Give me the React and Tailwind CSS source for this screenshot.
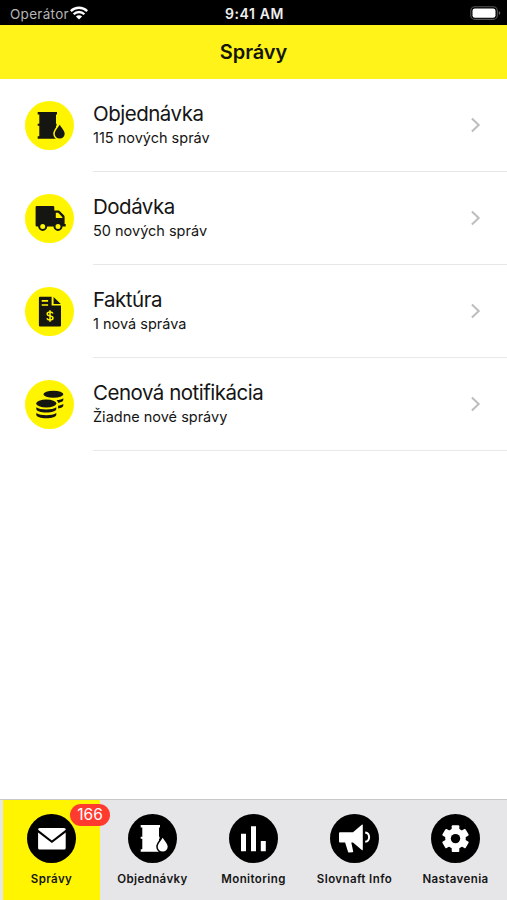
import React from "react";

function Barrel({ gap }) {
  return (
    <>
      <path d="M12.7 11h19.3v2.4h-1v9.4h.6v2h-.6v10.5h1v2.4H12.7v-2.4h1.6V24.8h-1.6v-2h1.6v-9.4h-1.6z" />
      <path d="M34.7 23.7c-1.7 3-5 5.9-5 8.9a5 5 0 0 0 10 0c0-3-3.3-5.9-5-8.9z" stroke={gap} strokeWidth="3" />
      <path d="M34.7 23.7c-1.7 3-5 5.9-5 8.9a5 5 0 0 0 10 0c0-3-3.3-5.9-5-8.9z" />
    </>
  );
}

function Truck() {
  return (
    <>
      <path d="M12 12h16a1.3 1.3 0 0 1 1.3 1.3v3.3h3.9q1 0 1.7.7l4 4q.7.7.7 1.7v7h1.1v2.5H11.9a1.3 1.3 0 0 1-1.3-1.3V13.3a1.3 1.3 0 0 1 1.4-1.3z" />
      <path d="M30.8 18.8h2.4l4.2 4.5v.8h-6.6z" fill="#fff500" />
      <circle cx="17.7" cy="32.4" r="3.5" fill="#fff500" stroke="#151511" strokeWidth="2" />
      <circle cx="33" cy="32.4" r="3.5" fill="#fff500" stroke="#151511" strokeWidth="2" />
    </>
  );
}

function Invoice() {
  return (
    <>
      <path d="M15 9.8h11.6v8.8H36V38.4a1.1 1.1 0 0 1-1.1 1.1H15a1.1 1.1 0 0 1-1.1-1.1V10.9A1.1 1.1 0 0 1 15 9.8zM28.6 10l7.2 7h-7.2z" />
      <path d="M16.7 13.9h6.4M16.7 18h6.4" stroke="#fff500" strokeWidth="1.6" />
      <path d="M28 26.5c-.5-1-1.5-1.5-3-1.5-1.7 0-2.8.7-2.8 1.9 0 2.8 5.8 1.3 5.8 4 0 1.3-1.2 2-3 2-1.6 0-2.7-.6-3.1-1.7M25 23.2v11.6" fill="none" stroke="#fff500" strokeWidth="1.5" />
    </>
  );
}

function Coins() {
  return (
    <>
      <ellipse cx="28.4" cy="14.2" rx="10" ry="3.5" />
      <path d="M31.5 20.3c3-.3 5.4-1 6.8-2v1.8c0 1.3-2.2 2.2-5 2.8-.4-1-.9-1.9-1.8-2.6zM33.1 25.8c2.1-.4 4-1 5.2-1.8v1.8c0 1.2-2 2.2-5.2 2.8z" />
      <ellipse cx="21.3" cy="23.5" rx="10.1" ry="4" />
      <path d="M11.3 27.3c2.2 1.5 5.7 2.2 10 2.2s7.8-.7 10-2.2v1.6c0 2-4.5 3.5-10 3.5s-10-1.5-10-3.5zM11.3 33.1c2.2 1.5 5.7 2.2 10 2.2s7.8-.7 10-2.2v1.6c0 2-4.5 3.5-10 3.5s-10-1.5-10-3.5z" />
    </>
  );
}

function Mail() {
  return (
    <>
      <path d="M12.6 14h24.6a1.5 1.5 0 0 1 1.5 1.5v.2L24.9 26.4 11.1 15.7v-.2a1.5 1.5 0 0 1 1.5-1.5z" />
      <path d="M11.1 18.5 24.9 29l13.8-10.5v15.4a1.5 1.5 0 0 1-1.5 1.5H12.6a1.5 1.5 0 0 1-1.5-1.5z" />
    </>
  );
}

function Bars() {
  return <path d="M12 19.7h5v17.6h-5zM22 12.3h5v25h-5zM31.8 27h5v10.3h-5z" />;
}

function Megaphone() {
  return (
    <>
      <path d="M10 18.2h13l8.8-7.4q1-.7 1 .3v24.5q0 1-1 .3L23 28.4h-1.7l1.9 9q.1.7-.6.8l-3.6.4q-.7 0-.9-.7l-3-9.5H10a1 1 0 0 1-1-1v-8.2a1 1 0 0 1 1-1z" />
      <path d="M35.2 18.6c5.2.7 5.2 8.5 0 9.2" fill="none" stroke="white" strokeWidth="2" />
    </>
  );
}

function Gear() {
  return (
    <>
      {[0, 60, 120].map((a) => (
        <rect key={a} x="20.7" y="11.2" width="7.6" height="26.8" rx="1" transform={`rotate(${a} 24.5 24.6)`} />
      ))}
      <circle cx="24.5" cy="24.6" r="10.3" />
      <circle cx="24.5" cy="24.6" r="4.7" fill="black" />
    </>
  );
}

function Badge({ dark, children }) {
  return (
    <svg viewBox="0 0 49 49" className="block h-[49px] w-[49px] shrink-0" fill={dark ? "white" : "#151511"} aria-hidden="true">
      <circle cx="24.5" cy="24.5" r="24.5" fill={dark ? "black" : "#fff500"} />
      {children}
    </svg>
  );
}

const messages = [
  { title: "Objednávka", note: "115 nových správ", icon: <Barrel gap="#fff500" /> },
  { title: "Dodávka", note: "50 nových správ", icon: <Truck /> },
  { title: "Faktúra", note: "1 nová správa", icon: <Invoice /> },
  { title: "Cenová notifikácia", note: "Žiadne nové správy", icon: <Coins /> },
];

const tabs = [
  { label: "Správy", icon: <Mail />, count: 166 },
  { label: "Objednávky", icon: <Barrel gap="black" /> },
  { label: "Monitoring", icon: <Bars /> },
  { label: "Slovnaft Info", icon: <Megaphone /> },
  { label: "Nastavenia", icon: <Gear /> },
];

export default function App() {
  return (
    <div className="flex h-[900px] w-[507px] flex-col overflow-hidden bg-white font-[Inter,sans-serif] text-[#151515]">
      <div className="grid h-[25px] shrink-0 grid-cols-3 items-center bg-black pr-[6px] pl-[10px]">
        <div className="flex items-center pt-[2px]">
          <span className="text-[13.5px] leading-5 tracking-[0.3px] text-[#b5b5b5]">Operátor</span>
          <svg viewBox="0 0 18 14" className="ml-px h-[14px] w-[18px] -translate-y-px" fill="none" stroke="white" strokeWidth="2.3" aria-hidden="true">
            <path d="M.8 5.1a11.7 11.7 0 0 1 16.4 0M3.6 8.2a7.7 7.7 0 0 1 10.8 0" />
            <path d="M9 13.6 5.9 10.5a4.4 4.4 0 0 1 6.2 0z" fill="white" stroke="none" />
          </svg>
        </div>
        <span className="pt-[2px] pr-[2px] text-center text-[14px] leading-5 font-semibold tracking-[0.6px] text-[#eee]">9:41 AM</span>
        <svg viewBox="0 0 31 14" className="h-[14px] w-[31px] justify-self-end" aria-hidden="true">
          <rect x=".8" y=".8" width="26.5" height="12.6" rx="4" fill="none" stroke="#555" strokeWidth="1.1" />
          <rect x="2.5" y="2.4" width="23" height="9.4" rx="2.4" fill="white" />
          <path d="M28.8 5q3 2 0 4.2z" fill="#666" />
        </svg>
      </div>
      <header className="flex h-[54px] shrink-0 items-center justify-center bg-[#fff31a]">
        <h1 className="text-[20px] leading-6 font-semibold tracking-[-0.1px] text-[#151505]">Správy</h1>
      </header>
      <main className="flex-1">
        {messages.map((m) => (
          <div key={m.title} className="flex h-[93px] pl-[25px]">
            <div className="pt-[22px]"><Badge>{m.icon}</Badge></div>
            <div className="ml-[19px] flex flex-1 justify-between border-b border-[#e8e8e8] pr-[26px]">
              <div className="pt-[22px]">
                <div className="text-[20.5px] leading-[26px] tracking-[-0.5px]">{m.title}</div>
                <div className="text-[14.5px] leading-[22px]">{m.note}</div>
              </div>
              <svg viewBox="0 0 10 16" className="mt-[38px] h-4 w-[10px]" fill="none" stroke="#bdbdbd" strokeWidth="2" aria-hidden="true">
                <path d="m.9 1.5 6.8 6.5-6.8 6.5" />
              </svg>
            </div>
          </div>
        ))}
      </main>
      <nav className="grid h-[101px] shrink-0 grid-cols-5 border-t border-[#c8c8c9] bg-[#e6e6e8] px-px">
        {tabs.map((t) => (
          <div key={t.label} className="relative flex justify-center pr-[2px] pl-[2px]">
            <div className={t.count ? "flex w-[97px] flex-col items-center bg-[#fff500] pt-[13.5px]" : "flex w-[97px] flex-col items-center pt-[13.5px]"}>
              <Badge dark>{t.icon}</Badge>
              <span className="mt-[7px] text-[11.5px] leading-[18px] font-semibold tracking-[0.4px] whitespace-nowrap">{t.label}</span>
            </div>
            {t.count && (
              <span className="absolute top-[4px] left-[69px] flex h-[22px] w-[40px] items-center justify-center rounded-full bg-[#ff3b30] text-[15.5px] text-white">
                {t.count}
              </span>
            )}
          </div>
        ))}
      </nav>
    </div>
  );
}
